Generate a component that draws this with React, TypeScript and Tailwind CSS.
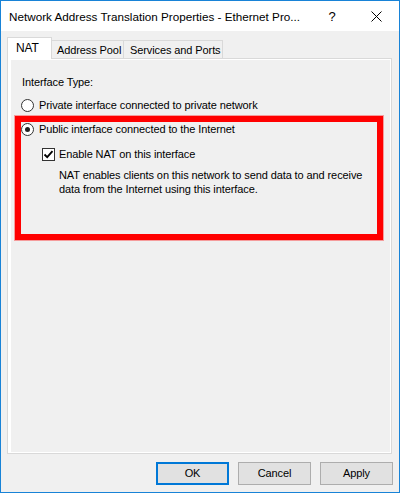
export default function App() {
  return (
    <div className="w-[400px] h-[493px] border border-[#1883d7] bg-[#f0f0f0] flex flex-col text-[11px] tracking-[-0.1px] leading-[15px] text-black font-['Liberation_Sans',Arial,sans-serif] overflow-hidden">
      {/* Title bar */}
      <div className="h-[30px] bg-white flex items-center shrink-0">
        <div className="flex-1 pl-[8px] whitespace-nowrap overflow-hidden text-[11.7px] tracking-normal">
          Network Address Translation Properties - Ethernet Pro...
        </div>
        <div className="w-[46px] h-full flex items-center justify-center text-[13px] pl-[4px]">?</div>
        <div className="w-[46px] h-full flex items-center justify-center">
          <svg width="11" height="11" viewBox="0 0 11 11">
            <path d="M0.5 0.5 L10.5 10.5 M10.5 0.5 L0.5 10.5" stroke="#000" strokeWidth="1" fill="none" />
          </svg>
        </div>
      </div>

      {/* Tabs */}
      <div className="ml-[6px] mt-[6px] flex items-end h-[21px]">
        <div className="relative z-10 -mb-px w-[45px] h-[22px] bg-white border border-b-0 border-[#d9d9d9] pl-[8px] pt-[3px] text-[12px]">
          NAT
        </div>
        <div className="w-[72px] h-[18px] bg-[#f0f0f0] border border-b-0 border-l-0 border-[#d9d9d9] pl-[5px] pt-[2px] whitespace-nowrap">
          Address Pool
        </div>
        <div className="w-[99px] h-[18px] bg-[#f0f0f0] border border-b-0 border-l-0 border-[#d9d9d9] pl-[6px] pt-[2px] whitespace-nowrap">
          Services and Ports
        </div>
      </div>

      {/* Panel */}
      <div className="ml-[6px] w-[385px] h-[396px] border border-[#d9d9d9] bg-white pl-[3px] pt-[1px] pr-px pb-px">
        <div className="relative w-full h-full bg-[#f0f0f0] pl-[11px] pt-[15px]">
          <div className="h-[15px] whitespace-nowrap">Interface Type:</div>

          <div className="mt-[8px] h-[15px] flex items-center -ml-px">
            <div className="w-[13px] h-[13px] rounded-full border border-[#333] bg-white" />
            <span className="ml-[5px] whitespace-nowrap">Private interface connected to private network</span>
          </div>

          <div className="mt-[9px] h-[15px] flex items-center -ml-px">
            <div className="w-[13px] h-[13px] rounded-full border border-[#333] bg-white flex items-center justify-center">
              <div className="w-[5px] h-[5px] rounded-full bg-[#222]" />
            </div>
            <span className="ml-[5px] whitespace-nowrap">Public interface connected to the Internet</span>
          </div>

          <div className="mt-[10px] h-[15px] flex items-center pl-[20px]">
            <div className="w-[13px] h-[13px] border border-[#333] bg-white flex items-center justify-center">
              <svg width="11" height="11" viewBox="0 0 11 11">
                <path d="M1.5 5.5 L4.2 8.2 L9.5 2.2" stroke="#000" strokeWidth="1.8" fill="none" />
              </svg>
            </div>
            <span className="ml-[4px] whitespace-nowrap">Enable NAT on this interface</span>
          </div>

          <div className="mt-[6px] pl-[37px] leading-[14px]">
            <div className="whitespace-nowrap">NAT enables clients on this network to send data to and receive</div>
            <div className="whitespace-nowrap">data from the Internet using this interface.</div>
          </div>

          {/* Red annotation rectangle */}
          <div className="absolute left-[4px] top-[56px] w-[368px] h-[124px] border-[6px] border-[#ff0000] shadow-[0_0_0_1px_rgba(255,0,0,0.35)] pointer-events-none" />
        </div>
      </div>

      {/* Buttons */}
      <div className="mt-[8px] flex justify-end gap-[9px] pr-[6px]">
        <button className="w-[73px] h-[23px] bg-[#e1e1e1] border-2 border-[#0078d7] flex items-center justify-center">OK</button>
        <button className="w-[73px] h-[23px] bg-[#e1e1e1] border border-[#adadad] flex items-center justify-center">Cancel</button>
        <button className="w-[73px] h-[23px] bg-[#e1e1e1] border border-[#adadad] flex items-center justify-center">Apply</button>
      </div>
    </div>
  );
}
